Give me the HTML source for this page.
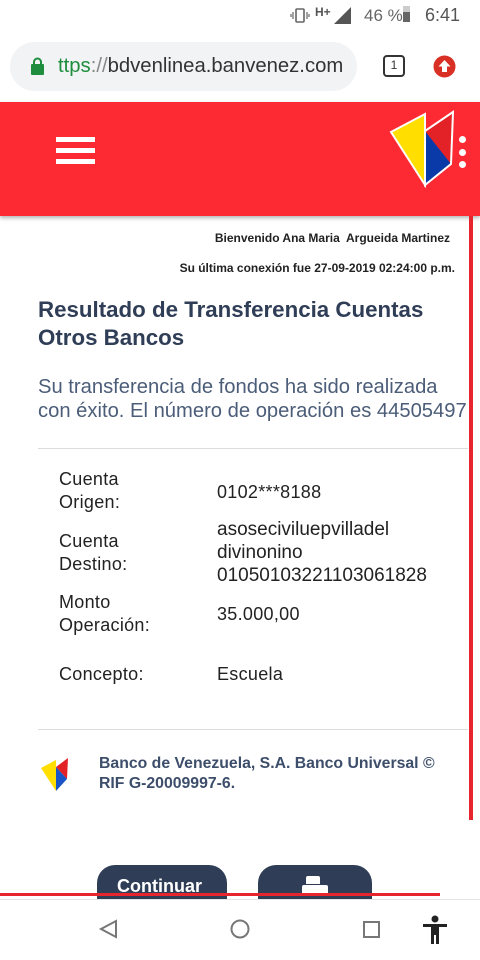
<!DOCTYPE html>
<html><head><meta charset="utf-8"><style>
*{margin:0;padding:0;box-sizing:border-box}
body{width:480px;height:960px;overflow:hidden;background:#fff;font-family:"Liberation Sans",sans-serif;position:relative}
.a{position:absolute;white-space:nowrap}
.navy{color:#2f3e56}
.lbl{font-size:18px;color:#222;line-height:23px;letter-spacing:0.3px}
</style></head><body>
<div class="a" style="left:290px;top:6px;width:18px;height:18px">
<svg width="20" height="20" viewBox="0 0 20 20"><rect x="6" y="3" width="8" height="13" rx="1" fill="none" stroke="#666" stroke-width="1.6"/><path d="M3 6v7M17 6v7M1 8v3M19 8v3" stroke="#666" stroke-width="1.2"/></svg></div>
<div class="a" style="left:315px;top:5px;font-size:12px;font-weight:bold;color:#555">H+</div>
<svg class="a" style="left:334px;top:7px" width="17" height="17"><path d="M0 17L17 0V17Z" fill="#555"/></svg>
<div class="a" style="left:364px;top:6px;font-size:17px;color:#666">46 %</div>
<div class="a" style="left:403px;top:8px;width:7px;height:14px;background:#666"></div>
<div class="a" style="left:403px;top:6px;width:7px;height:6px;background:#ccc"></div>
<div class="a" style="left:425px;top:5px;font-size:18px;color:#555">6:41</div>
<div class="a" style="left:10px;top:42px;width:347px;height:49px;border-radius:25px;background:#f1f3f4"></div>
<svg class="a" style="left:30px;top:57px" width="15" height="18"><rect x="1" y="7" width="13" height="11" rx="1" fill="#1e8e3e"/><path d="M4 8V5a3.5 3.5 0 0 1 7 0v3" fill="none" stroke="#1e8e3e" stroke-width="2"/></svg>
<div class="a" style="left:58px;top:55px;font-size:20.3px;color:#333"><span style="color:#1e8e3e">ttps</span><span style="color:#888">://</span>bdvenlinea.banvenez.com</div>
<div class="a" style="left:383px;top:55px;width:22px;height:22px;border:2.5px solid #333;border-radius:4px;font-size:12px;text-align:center;line-height:17px;color:#333">1</div>
<svg class="a" style="left:433px;top:55px" width="23" height="23"><circle cx="11.5" cy="11.5" r="11" fill="#d93025"/><path d="M11.5 5L5.5 11.5H9V17H14V11.5H17.5Z" fill="#fff"/></svg>
<div class="a" style="left:0;top:102px;width:480px;height:114px;background:#fd2a33;box-shadow:0 2px 4px rgba(0,0,0,.3)"></div>
<div class="a" style="left:56px;top:137px;width:39px;height:5px;background:#fff"></div>
<div class="a" style="left:56px;top:148px;width:39px;height:5px;background:#fff"></div>
<div class="a" style="left:56px;top:159px;width:39px;height:5px;background:#fff"></div>
<svg class="a" style="left:388px;top:102px" width="70" height="88" viewBox="0 0 70 88">
<path d="M3 30L37 12L37 83Z" fill="#ffde00" stroke="#fff" stroke-width="2"/>
<path d="M37 29L65 10L63 62Z" fill="#e32227"/>
<path d="M37 29L63 62L37 83Z" fill="#0a3aa8"/>
<path d="M37 29L65 10L63 62L37 83Z" fill="none" stroke="#fff" stroke-width="2"/>
</svg>
<div class="a" style="left:459px;top:136px;width:7px;height:7px;border-radius:50%;background:#fff"></div>
<div class="a" style="left:459px;top:149px;width:7px;height:7px;border-radius:50%;background:#fff"></div>
<div class="a" style="left:459px;top:161px;width:7px;height:7px;border-radius:50%;background:#fff"></div>
<div class="a" style="left:469px;top:216px;width:4px;height:604px;background:#e8242c"></div>
<div class="a" style="right:30px;top:231px;font-size:12px;font-weight:bold;color:#222">Bienvenido Ana Maria&nbsp; Argueida Martinez</div>
<div class="a" style="right:25px;top:261px;font-size:12px;font-weight:bold;color:#222">Su última conexión fue 27-09-2019 02:24:00 p.m.</div>
<div class="a navy" style="left:38px;top:296px;font-size:22.3px;font-weight:bold;line-height:28px">Resultado de Transferencia Cuentas<br>Otros Bancos</div>
<div class="a" style="left:38px;top:375px;font-size:20.2px;line-height:24px;color:#4b5d78">Su transferencia de fondos ha sido realizada<br>con éxito. El número de operación es 44505497</div>
<div class="a" style="left:38px;top:448px;width:430px;height:1px;background:#ddd"></div>
<div class="a lbl" style="left:59px;top:468px">Cuenta<br>Origen:</div>
<div class="a lbl" style="left:217px;top:481px">0102***8188</div>
<div class="a lbl" style="left:59px;top:530px">Cuenta<br>Destino:</div>
<div class="a lbl" style="left:217px;top:518px;font-size:19px;letter-spacing:0">asoseciviluepvilladel<br>divinonino<br>01050103221103061828</div>
<div class="a lbl" style="left:59px;top:591px">Monto<br>Operación:</div>
<div class="a lbl" style="left:217px;top:603px">35.000,00</div>
<div class="a lbl" style="left:59px;top:663px">Concepto:</div>
<div class="a lbl" style="left:217px;top:663px">Escuela</div>
<div class="a" style="left:38px;top:729px;width:430px;height:1px;background:#ddd"></div>
<svg class="a" style="left:40px;top:755px" width="32" height="38" viewBox="0 0 32 38">
<path d="M1 13L16 5L16 36Z" fill="#ffde00"/><path d="M16 12L28 3L27 24Z" fill="#e32227"/><path d="M16 12L27 24L16 36Z" fill="#1a55c8"/></svg>
<div class="a navy" style="left:99px;top:754px;font-size:15.8px;font-weight:bold;line-height:20px;color:#3d4e6b">Banco de Venezuela, S.A. Banco Universal ©<br>RIF G-20009997-6.</div>
<div class="a" style="left:97px;top:865px;width:130px;height:40px;border-radius:18px 18px 0 0;background:#2f3e56"></div>
<div class="a" style="left:117px;top:876px;font-size:18px;font-weight:bold;color:#fff">Continuar</div>
<div class="a" style="left:258px;top:865px;width:114px;height:40px;border-radius:18px 18px 0 0;background:#2f3e56"></div>
<div class="a" style="left:306px;top:876px;width:14px;height:8px;background:#fff;border-radius:2px 2px 0 0"></div>
<div class="a" style="left:302px;top:885px;width:26px;height:10px;background:#fff;border-radius:2px"></div>
<div class="a" style="left:0;top:893px;width:440px;height:3px;background:#e8242c"></div>
<div class="a" style="left:0;top:899px;width:480px;height:61px;background:#fff;border-top:1px solid #e5e5e5"></div>
<svg class="a" style="left:98px;top:918px" width="22" height="22"><path d="M3 11L18 3V19Z" fill="none" stroke="#777" stroke-width="2"/></svg>
<svg class="a" style="left:229px;top:918px" width="22" height="22"><circle cx="11" cy="11" r="8.5" fill="none" stroke="#777" stroke-width="2"/></svg>
<svg class="a" style="left:362px;top:920px" width="20" height="20"><rect x="2" y="2" width="15" height="15" fill="none" stroke="#777" stroke-width="2"/></svg>
<svg class="a" style="left:421px;top:915px" width="28" height="30" viewBox="0 0 28 30"><circle cx="14" cy="4" r="3.5" fill="#222"/><path d="M2 9H26V12H18V29H15V20H13V29H10V12H2Z" fill="#222"/></svg>
</body></html>
